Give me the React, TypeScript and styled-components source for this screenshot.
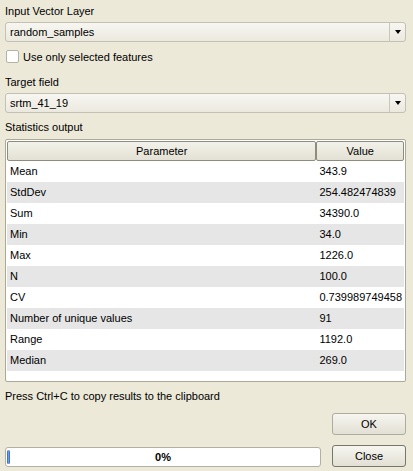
import React from "react";
import styled, { createGlobalStyle } from "styled-components";

const GlobalStyle = createGlobalStyle`
  html, body {
    margin: 0;
    padding: 0;
    background: #ece9d8;
  }
  body {
    font-family: "Liberation Sans", Arial, sans-serif;
    font-size: 11px;
    color: #000;
  }
`;

const Dialog = styled.div`
  width: 413px;
  height: 471px;
  box-sizing: border-box;
  padding: 3px 7px 0 5px;
  background: #ece9d8;
  display: flex;
  flex-direction: column;
`;

const Label = styled.div<{ $top?: number }>`
  height: 16px;
  line-height: 16px;
  margin-top: ${(p) => p.$top ?? 0}px;
  white-space: nowrap;
`;

const Combo = styled.div`
  margin-top: 3px;
  height: 20px;
  box-sizing: border-box;
  border: 1px solid #c3c1b3;
  border-radius: 3px;
  background: linear-gradient(#f7f6f1, #ebe9df);
  display: flex;
  align-items: stretch;
`;

const ComboText = styled.div`
  flex: 1;
  padding-left: 4px;
  line-height: 18px;
`;

const ComboArrow = styled.div`
  width: 15px;
  border-left: 1px solid #c9c7ba;
  display: flex;
  align-items: center;
  justify-content: center;
  &::after {
    content: "";
    border-left: 3.5px solid transparent;
    border-right: 3.5px solid transparent;
    border-top: 4px solid #000;
  }
`;

const CheckRow = styled.label`
  margin-top: 7px;
  height: 15px;
  display: flex;
  align-items: center;
  gap: 4px;
  padding-left: 1px;
`;

const CheckBox = styled.span`
  width: 13px;
  height: 13px;
  box-sizing: border-box;
  border: 1px solid #b4b2a5;
  border-radius: 2px;
  background: #fff;
`;

const TableFrame = styled.div`
  margin-top: 4px;
  height: 243px;
  box-sizing: border-box;
  border: 1px solid #aba899;
  border-radius: 2px;
  background: #fff;
  padding: 1px 1px 0 1px;
  overflow: hidden;
`;

const HeaderRow = styled.div`
  display: flex;
  height: 20px;
`;

const HeaderCell = styled.div<{ $w: number }>`
  width: ${(p) => p.$w}px;
  box-sizing: border-box;
  border: 1px solid #8e8c7d;
  border-radius: 2px;
  background: linear-gradient(#f3f2ea, #e3e1d4);
  text-align: center;
  line-height: 18px;
`;

const DataRow = styled.div<{ $alt: boolean }>`
  display: flex;
  height: 21px;
  background: ${(p) => (p.$alt ? "#e6e6e6" : "#fff")};
  line-height: 21px;
`;

const DataCell = styled.div<{ $w: number }>`
  width: ${(p) => p.$w}px;
  padding-left: 3px;
  box-sizing: border-box;
  white-space: nowrap;
`;

const ButtonRow = styled.div<{ $top: number }>`
  margin-top: ${(p) => p.$top}px;
  display: flex;
  justify-content: flex-end;
  align-items: center;
  gap: 11px;
`;

const Button = styled.div<{ $focus?: boolean }>`
  width: 74px;
  height: 22px;
  box-sizing: border-box;
  border: 1px solid ${(p) => (p.$focus ? "#77766a" : "#aeac9f")};
  border-radius: 3px;
  background: linear-gradient(#f6f5f0, #e2e0d4);
  text-align: center;
  line-height: 20px;
`;

const Progress = styled.div`
  flex: 1;
  height: 20px;
  margin-top: 2px;
  box-sizing: border-box;
  border: 1px solid #b2b0a2;
  border-radius: 3px;
  background: #fff;
  position: relative;
  display: flex;
  align-items: center;
  justify-content: center;
  font-weight: bold;
`;

const Chunk = styled.span`
  position: absolute;
  left: 1px;
  top: 2px;
  bottom: 2px;
  width: 3px;
  border-radius: 2px;
  background: linear-gradient(90deg, #2f5fc7, #6f9ae8, #2f5fc7);
`;

const stats: [string, string][] = [
  ["Mean", "343.9"],
  ["StdDev", "254.482474839"],
  ["Sum", "34390.0"],
  ["Min", "34.0"],
  ["Max", "1226.0"],
  ["N", "100.0"],
  ["CV", "0.739989749458"],
  ["Number of unique values", "91"],
  ["Range", "1192.0"],
  ["Median", "269.0"],
];

export default function App() {
  return (
    <>
      <GlobalStyle />
      <Dialog>
        <Label>Input Vector Layer</Label>
        <Combo>
          <ComboText>random_samples</ComboText>
          <ComboArrow />
        </Combo>
        <CheckRow>
          <CheckBox />
          Use only selected features
        </CheckRow>
        <Label $top={10}>Target field</Label>
        <Combo>
          <ComboText>srtm_41_19</ComboText>
          <ComboArrow />
        </Combo>
        <Label $top={6}>Statistics output</Label>
        <TableFrame>
          <HeaderRow>
            <HeaderCell $w={311}>Parameter</HeaderCell>
            <HeaderCell $w={88}>Value</HeaderCell>
          </HeaderRow>
          {stats.map(([name, value], i) => (
            <DataRow key={name} $alt={i % 2 === 1}>
              <DataCell $w={311}>{name}</DataCell>
              <DataCell $w={88}>{value}</DataCell>
            </DataRow>
          ))}
        </TableFrame>
        <Label $top={6}>Press Ctrl+C to copy results to the clipboard</Label>
        <ButtonRow $top={9}>
          <Button>OK</Button>
        </ButtonRow>
        <ButtonRow $top={10}>
          <Progress>
            <Chunk />
            0%
          </Progress>
          <Button $focus>Close</Button>
        </ButtonRow>
      </Dialog>
    </>
  );
}
